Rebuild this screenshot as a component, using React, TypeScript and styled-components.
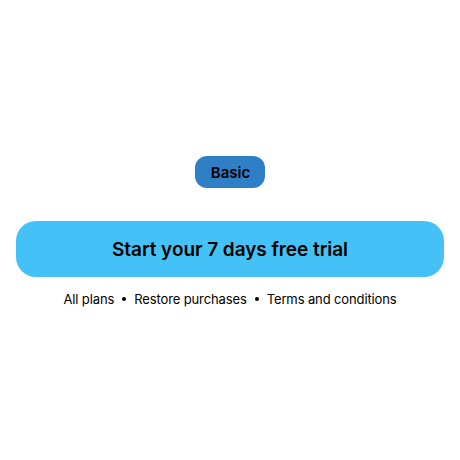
import React from "react";
import styled, { createGlobalStyle } from "styled-components";

const Global = createGlobalStyle`
  html, body { margin: 0; padding: 0; background: #ffffff; }
  body { font-family: Inter, "Noto Sans", sans-serif; color: #000; }
`;

const Page = styled.div`
  width: 460px;
  height: 460px;
  box-sizing: border-box;
  padding: 156px 16px 0;
  display: flex;
  flex-direction: column;
  align-items: center;
`;

const Badge = styled.div`
  height: 32px;
  padding: 0 15px 0 16px;
  border-radius: 12px;
  background: #2f7fc6;
  display: flex;
  align-items: center;
  font-size: 15px;
  font-weight: 600;
  color: #000;
`;

const CTA = styled.button`
  margin-top: 33px;
  width: 100%;
  height: 56px;
  border: none;
  border-radius: 20px;
  background: #44c2f7;
  font-family: Inter, "Noto Sans", sans-serif;
  font-size: 19px;
  font-weight: 600;
  letter-spacing: -0.05px;
  color: #000;
  display: flex;
  align-items: center;
  justify-content: center;
  padding: 0;
`;

const Links = styled.div`
  margin-top: 14px;
  display: flex;
  align-items: center;
  gap: 8px;
  font-size: 13px;
  line-height: 16px;
  letter-spacing: -0.12px;
  color: #000;
`;

const Dot = styled.span`
  width: 4px;
  height: 4px;
  border-radius: 50%;
  background: #000;
`;

export default function App() {
  const links = ["All plans", "Restore purchases", "Terms and conditions"];
  return (
    <>
      <Global />
      <Page>
        <Badge>Basic</Badge>
        <CTA>Start your 7 days free trial</CTA>
        <Links>
          {links.map((l, i) => (
            <React.Fragment key={l}>
              {i > 0 && <Dot />}
              <span>{l}</span>
            </React.Fragment>
          ))}
        </Links>
      </Page>
    </>
  );
}
